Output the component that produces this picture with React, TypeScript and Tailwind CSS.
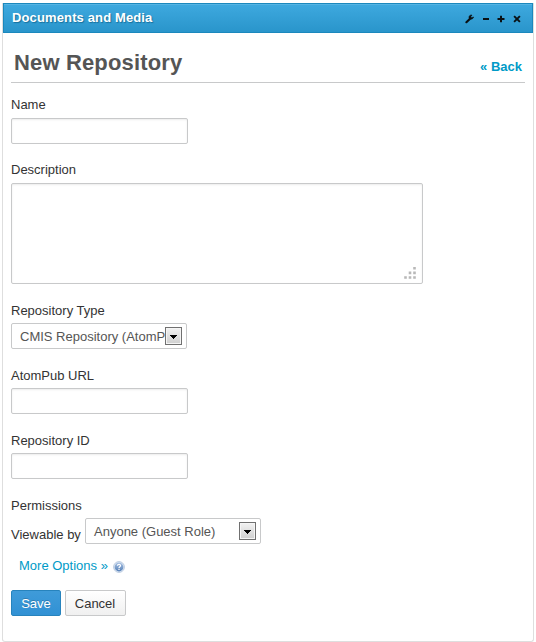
import React from 'react';

function Field({ label, id, low, children }: { label: string; id?: string; low?: boolean; children: React.ReactNode }) {
  return (
    <div className="flex flex-col items-start">
      <label htmlFor={id} className={`h-[23px] whitespace-nowrap leading-5 ${low ? 'pt-px' : ''}`}>{label}</label>
      {children}
    </div>
  );
}

function TextInput({ id }: { id: string }) {
  return (
    <input
      id={id}
      type="text"
      className="block h-[26px] w-[177px] rounded-[2px] border border-[#c8c9ca] bg-white px-2 shadow-[inset_0_1px_2px_rgba(0,0,0,0.08)] outline-none"
    />
  );
}

function Select({ value }: { value: string }) {
  return (
    <button
      type="button"
      className="flex h-[26px] w-[176px] items-center rounded-[2px] border border-[#c8c9ca] bg-white pl-2 pr-1 text-left text-[#555]"
    >
      <span className="min-w-0 flex-1 whitespace-nowrap pt-0.5 leading-5">{value}</span>
      <span className="flex h-[18px] w-[17px] shrink-0 items-center justify-center border border-[#707070] bg-gradient-to-b from-[#f2f2f2] to-[#cfcfcf] shadow-[inset_0_0_0_1px_#f5f5f5]">
        <svg width="7" height="4" viewBox="0 0 7 4" shapeRendering="crispEdges" className="mt-0.5">
          <path d="M0 0H7V1H6V2H5V3H4V4H3V3H2V2H1V1H0Z" fill="#000" />
        </svg>
      </span>
    </button>
  );
}

function HeaderIcons() {
  return (
    <svg width="58" height="11" viewBox="0 0 58 11" className="mt-[3px]" fill="none" stroke="#0a1114">
      <path d="M2.4 8.2 5.8 5" strokeWidth="2.2" strokeLinecap="round" />
      <path d="M8 1C5.7 .8 4.5 2.4 5.1 4.2 6 6 9 5.4 9.6 3L7.6 3.7 6.8 2.7Z" fill="#0a1114" strokeWidth=".6" />
      <path d="M19 5H25" strokeWidth="2" />
      <path d="M33.5 5H40.5M37 1.8V8.2" strokeWidth="2" />
      <path d="M50.1 2.1 55.9 7.9M55.9 2.1 50.1 7.9" strokeWidth="1.9" />
    </svg>
  );
}

function HelpIcon() {
  return (
    <svg width="12" height="12" viewBox="0 0 12 12" className="ml-[5px] mt-[2px]">
      <defs>
        <linearGradient id="help" x1="0" y1="0" x2="0" y2="1">
          <stop offset="0" stopColor="#a9c1e2" />
          <stop offset="1" stopColor="#5580b8" />
        </linearGradient>
      </defs>
      <circle cx="6" cy="6" r="5.4" fill="#e3ebf5" stroke="#b4c6de" strokeWidth=".9" />
      <circle cx="6" cy="6" r="4.4" fill="url(#help)" />
      <path d="M4.4 4.7C4.5 2.8 7.7 2.9 7.5 4.7 7.4 5.7 6 5.7 6 6.9M6 7.8V9" fill="none" stroke="#fff" strokeWidth="1.2" />
    </svg>
  );
}

export default function App() {
  return (
    <div className="h-[642px] w-[536px] bg-white px-0.5 pt-[3px] font-['Liberation_Sans',Arial,sans-serif] text-[13px] text-[#333]">
      <section className="h-[639px] rounded-b-[3px] border-x border-b border-[#dedede]">
        <header className="flex h-[30px] items-center justify-between border border-[#1b88bd] bg-gradient-to-b from-[#3ea9df] to-[#2995cb] pl-2 pr-[10px] shadow-[inset_0_1px_0_#56b4e3]">
          <h2 className="text-[13px] font-bold leading-5 tracking-[0.13px] text-white [text-shadow:1px_1px_1px_#17709d]">Documents and Media</h2>
          <HeaderIcons />
        </header>
        <main className="px-2">
          <div className="flex h-[50px] items-center justify-between border-b border-[#c8c9ca] px-[3px]">
            <h1 className="mt-[11px] text-[22px] font-bold leading-7 tracking-[0.15px] text-[#555]">New Repository</h1>
            <a className="mt-[19px] font-bold leading-5 text-[#009ac7]">« Back</a>
          </div>
          <form className="pt-3">
            <div className="flex flex-col gap-4">
              <Field label="Name" id="name"><TextInput id="name" /></Field>
              <Field label="Description" id="description">
                <div className="relative">
                  <textarea id="description" className="block h-[101px] w-[412px] resize-none rounded-[2px] border border-[#c8c9ca] bg-white p-2 shadow-[inset_0_1px_2px_rgba(0,0,0,0.08)] outline-none" />
                  <svg width="12" height="12" viewBox="0 0 12 12" className="pointer-events-none absolute bottom-[5px] right-[7px]" fill="#b8b8b8">
                    <path d="M9.2 0h2.6v2.6H9.2zM4.7 4.6h2.6v2.6H4.7zM9.2 4.6h2.6v2.6H9.2zM.2 9.2h2.6v2.6H.2zM4.7 9.2h2.6v2.6H4.7zM9.2 9.2h2.6v2.6H9.2z" />
                  </svg>
                </div>
              </Field>
              <Field label="Repository Type" low><Select value="CMIS Repository (AtomP" /></Field>
              <Field label="AtomPub URL" id="url" low><TextInput id="url" /></Field>
              <Field label="Repository ID" id="repository" low><TextInput id="repository" /></Field>
              <Field label="Permissions" low>
                <div className="flex">
                  <span className="w-[74px] whitespace-nowrap pt-[7px] leading-5">Viewable by</span>
                  <Select value="Anyone (Guest Role)" />
                </div>
              </Field>
            </div>
            <div className="mt-[11px] flex h-5 items-center pl-2">
              <a className="leading-5 text-[#009ac7]">More Options »</a>
              <HelpIcon />
            </div>
            <div className="mt-[14px] flex gap-1">
              <button type="button" className="h-[26px] w-[50px] rounded-[2px] border border-[#2783bd] bg-gradient-to-b from-[#3f9bd9] to-[#3191d4] pt-px text-white [text-shadow:0_-1px_0_rgba(0,0,0,0.2)]">Save</button>
              <button type="button" className="h-[26px] w-[61px] rounded-[2px] border border-[#c8c9ca] bg-gradient-to-b from-white to-[#f0f0f0] pr-px pt-px">Cancel</button>
            </div>
          </form>
        </main>
      </section>
    </div>
  );
}
